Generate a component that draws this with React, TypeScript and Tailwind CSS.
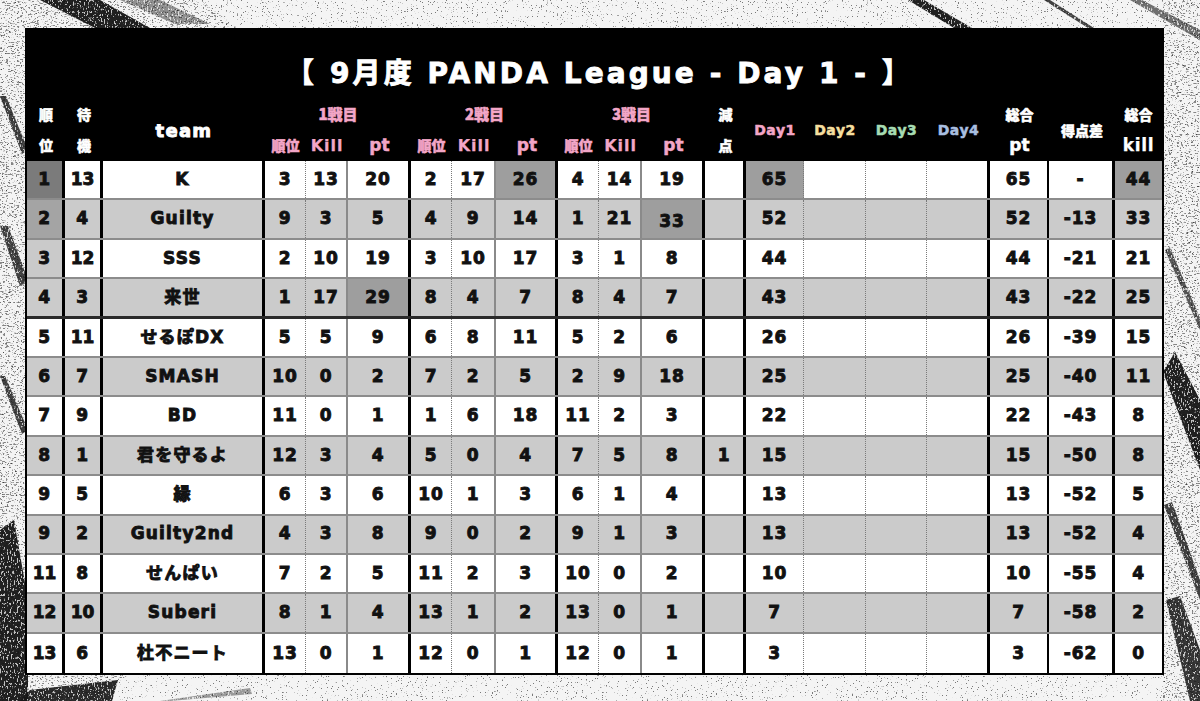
const FONT = "font-['DejaVu_Sans','Noto_Sans_CJK_JP',sans-serif]";
const JP = "font-['Noto_Sans_CJK_JP','DejaVu_Sans',sans-serif]";
const HEAVY = '[-webkit-text-stroke:0.9px_currentColor]';
const MID = '[-webkit-text-stroke:0.5px_currentColor]';
const THIN = '[-webkit-text-stroke:0.25px_currentColor]';

// widths include the right border of each cell
const cols = [
  { w: 'w-[38px]', b: 'border-r-[3px] border-r-black' }, // 順位
  { w: 'w-[38px]', b: 'border-r-[3px] border-r-black' }, // 待機
  { w: 'w-[162px]', b: 'border-r-[3px] border-r-black' }, // team
  { w: 'w-[41px]', b: 'border-r border-dotted border-r-[#7a7a7a]' },
  { w: 'w-[42px]', b: 'border-r-2 border-r-[#8a8a8a]' },
  { w: 'w-[63px]', b: 'border-r-[3px] border-r-black' },
  { w: 'w-[41px]', b: 'border-r border-dotted border-r-[#7a7a7a]' },
  { w: 'w-[44px]', b: 'border-r-2 border-r-[#8a8a8a]' },
  { w: 'w-[62px]', b: 'border-r-[3px] border-r-black' },
  { w: 'w-[41px]', b: 'border-r border-dotted border-r-[#7a7a7a]' },
  { w: 'w-[43px]', b: 'border-r-2 border-r-[#8a8a8a]' },
  { w: 'w-[63px]', b: 'border-r-[3px] border-r-black' },
  { w: 'w-[41px]', b: 'border-r-[3px] border-r-black' }, // 減点
  { w: 'w-[58px]', b: 'border-r border-dotted border-r-[#7a7a7a]' }, // Day1
  { w: 'w-[62px]', b: 'border-r border-dotted border-r-[#7a7a7a]' },
  { w: 'w-[61px]', b: 'border-r border-dotted border-r-[#7a7a7a]' },
  { w: 'w-[63px]', b: 'border-r-[3px] border-r-black' }, // Day4
  { w: 'w-[59px]', b: 'border-r-2 border-r-black' }, // 総合pt
  { w: 'w-[66px]', b: 'border-r-[3px] border-r-black' }, // 得点差
  { w: 'w-[47px]', b: '' }, // 総合kill
];

type Row = (string | number)[];

// rank, wait, team, r1,k1,p1, r2,k2,p2, r3,k3,p3, 減点, day1, day2, day3, day4, pt, 差, kill
const rows: Row[] = [
  [1, 13, 'K', 3, 13, 20, 2, 17, 26, 4, 14, 19, '', 65, '', '', '', 65, '-', 44],
  [2, 4, 'Guilty', 9, 3, 5, 4, 9, 14, 1, 21, 33, '', 52, '', '', '', 52, -13, 33],
  [3, 12, 'SSS', 2, 10, 19, 3, 10, 17, 3, 1, 8, '', 44, '', '', '', 44, -21, 21],
  [4, 3, '来世', 1, 17, 29, 8, 4, 7, 8, 4, 7, '', 43, '', '', '', 43, -22, 25],
  [5, 11, 'せるぽDX', 5, 5, 9, 6, 8, 11, 5, 2, 6, '', 26, '', '', '', 26, -39, 15],
  [6, 7, 'SMASH', 10, 0, 2, 7, 2, 5, 2, 9, 18, '', 25, '', '', '', 25, -40, 11],
  [7, 9, 'BD', 11, 0, 1, 1, 6, 18, 11, 2, 3, '', 22, '', '', '', 22, -43, 8],
  [8, 1, '君を守るよ', 12, 3, 4, 5, 0, 4, 7, 5, 8, 1, 15, '', '', '', 15, -50, 8],
  [9, 5, '縁', 6, 3, 6, 10, 1, 3, 6, 1, 4, '', 13, '', '', '', 13, -52, 5],
  [9, 2, 'Guilty2nd', 4, 3, 8, 9, 0, 2, 9, 1, 3, '', 13, '', '', '', 13, -52, 4],
  [11, 8, 'せんぱい', 7, 2, 5, 11, 2, 3, 10, 0, 2, '', 10, '', '', '', 10, -55, 4],
  [12, 10, 'Suberi', 8, 1, 4, 13, 1, 2, 13, 0, 1, '', 7, '', '', '', 7, -58, 2],
  [13, 6, '杜不ニート', 13, 0, 1, 12, 0, 1, 12, 0, 1, '', 3, '', '', '', 3, -62, 0],
];

// dark cells: "row-col"
const dark = new Set(['0-8', '0-13', '0-19', '1-11', '3-5']);
const rankBg = ['bg-[#7b7b7b]', 'bg-[#a4a4a4]', 'bg-[#cacaca]'];

// brush strokes drawn as filled quads
const strokes: { pts: string; o: number }[] = [
  { pts: '40,0 100,0 150,28 95,28', o: 0.95 },
  { pts: '120,0 160,0 210,24 175,24', o: 0.45 },
  { pts: '0,96 6,96 28,150 22,154', o: 0.8 },
  { pts: '0,226 8,226 28,280 20,286', o: 0.8 },
  { pts: '0,376 5,376 28,430 22,434', o: 0.8 },
  { pts: '0,530 14,520 28,600 28,701 0,701', o: 0.95 },
  { pts: '20,701 30,690 118,680 112,701', o: 0.9 },
  { pts: '160,701 250,688 252,694 170,701', o: 0.4 },
  { pts: '908,0 924,0 972,28 954,28', o: 0.95 },
  { pts: '1044,0 1050,0 1094,28 1088,28', o: 0.8 },
  { pts: '1130,0 1142,0 1200,30 1200,40', o: 0.6 },
  { pts: '1165,250 1170,248 1200,318 1200,330', o: 0.7 },
  { pts: '1163,372 1175,352 1200,400 1200,470', o: 0.95 },
  { pts: '1164,505 1172,502 1200,580 1200,600', o: 0.8 },
  { pts: '1166,600 1180,596 1200,650 1200,701 1190,701', o: 0.85 },
];

function Grunge() {
  return (
    <svg className="absolute inset-0" width="1200" height="701" viewBox="0 0 1200 701">
      <defs>
        <filter id="speck" x="0" y="0" width="100%" height="100%">
          <feTurbulence type="fractalNoise" baseFrequency="0.8" numOctaves="2" seed="4" />
          <feColorMatrix type="matrix" values="0 0 0 0 0  0 0 0 0 0  0 0 0 0 0  14 0 0 0 -9.4" />
        </filter>
        <filter id="dense" x="0" y="0" width="100%" height="100%">
          <feTurbulence type="fractalNoise" baseFrequency="0.35 0.9" numOctaves="3" seed="9" />
          <feColorMatrix type="matrix" values="0 0 0 0 0  0 0 0 0 0  0 0 0 0 0  10 0 0 0 -5.9" />
        </filter>
        <filter id="chips" x="0" y="0" width="100%" height="100%">
          <feTurbulence type="fractalNoise" baseFrequency="0.7 0.35" numOctaves="2" seed="12" />
          <feColorMatrix type="matrix" values="0 0 0 0 0.95  0 0 0 0 0.95  0 0 0 0 0.95  12 0 0 0 -7" />
        </filter>
        <clipPath id="edges">
          <polygon points="0,0 30,0 30,701 0,701" />
          <polygon points="1163,0 1200,0 1200,701 1163,701" />
          <polygon points="0,0 200,0 240,30 0,30" />
          <polygon points="0,674 130,674 90,701 0,701" />
        </clipPath>
        <clipPath id="strokeClip">
          {strokes.map((s, i) => (
            <polygon key={i} points={s.pts} />
          ))}
        </clipPath>
      </defs>
      <rect width="1200" height="701" filter="url(#speck)" opacity="0.5" />
      <rect width="1200" height="701" filter="url(#dense)" clipPath="url(#edges)" opacity="0.45" />
      {strokes.map((s, i) => (
        <polygon key={i} points={s.pts} fill="#151515" fillOpacity={s.o} />
      ))}
      <rect width="1200" height="701" filter="url(#chips)" clipPath="url(#strokeClip)" opacity="0.75" />
    </svg>
  );
}

function TwoLine({ w, a, b, cls }: { w: string; a: string; b: string; cls: string }) {
  return (
    <div className={`${w} flex flex-col`}>
      <div className={`h-[31px] flex items-center justify-center ${cls}`}>{a}</div>
      <div className={`h-[31px] flex items-center justify-center ${cls}`}>{b}</div>
    </div>
  );
}

function Group({ n, i }: { n: number; i: number }) {
  return (
    <div className="flex flex-col">
      <div className={`h-[31px] flex items-center justify-center text-[#f3a6c7] text-[15px] font-black ${MID} ${JP}`}>{n}戦目</div>
      <div className="h-[31px] flex text-[#f3a6c7]">
        <div className={`${cols[i].w} flex items-center justify-center text-[14px] font-black ${MID} ${JP}`}>順位</div>
        <div className={`${cols[i + 1].w} flex items-center justify-center text-[16px] font-bold tracking-[0.06em] ${THIN} ${FONT}`}>Kill</div>
        <div className={`${cols[i + 2].w} flex items-center justify-center text-[17px] font-bold ${MID} ${FONT}`}>pt</div>
      </div>
    </div>
  );
}

function Header() {
  const jpW = `text-white text-[14px] font-black ${MID} ${JP}`;
  const day = `text-[14px] font-bold tracking-[0.04em] ${MID} ${FONT}`;
  return (
    <div className="bg-black">
      <div className="h-[69px] pt-[30px]">
        <div className={`h-[28px] leading-[28px] text-center text-white text-[28px] font-bold tracking-[0.11em] ${HEAVY} ${FONT} pl-[10px]`}>
          【 9月度 PANDA League - Day 1 - 】
        </div>
      </div>
      <div className="flex h-[62px]">
        <TwoLine w={cols[0].w} a="順" b="位" cls={jpW} />
        <TwoLine w={cols[1].w} a="待" b="機" cls={jpW} />
        <div className={`${cols[2].w} flex items-center justify-center text-white text-[18px] font-bold tracking-[0.07em] ${HEAVY} ${FONT}`}>team</div>
        <Group n={1} i={3} />
        <Group n={2} i={6} />
        <Group n={3} i={9} />
        <TwoLine w={cols[12].w} a="減" b="点" cls={jpW} />
        <div className={`${cols[13].w} flex items-center justify-center text-[#f3a6c7] ${day}`}>Day1</div>
        <div className={`${cols[14].w} flex items-center justify-center text-[#f5df9f] ${day}`}>Day2</div>
        <div className={`${cols[15].w} flex items-center justify-center text-[#a6dcb3] ${day}`}>Day3</div>
        <div className={`${cols[16].w} flex items-center justify-center text-[#a9bfe0] ${day}`}>Day4</div>
        <div className={`${cols[17].w} flex flex-col`}>
          <div className={`h-[31px] flex items-center justify-center ${jpW}`}>総合</div>
          <div className={`h-[31px] flex items-center justify-center text-white text-[17px] font-bold ${MID} ${FONT}`}>pt</div>
        </div>
        <div className={`${cols[18].w} flex items-center justify-center ${jpW}`}>得点差</div>
        <div className={`${cols[19].w} flex flex-col`}>
          <div className={`h-[31px] flex items-center justify-center ${jpW}`}>総合</div>
          <div className={`h-[31px] flex items-center justify-center text-white text-[17px] font-bold tracking-[0.04em] ${THIN} ${FONT}`}>kill</div>
        </div>
      </div>
    </div>
  );
}

function Body() {
  return (
    <div>
      {rows.map((r, ri) => {
        const rowBg = ri % 2 === 0 ? 'bg-white' : 'bg-[#cbcbcb]';
        const sep =
          ri === rows.length - 1 ? '' : ri === 3 ? 'border-b-[3px] border-b-[#2a2a2a]' : 'border-b-2 border-b-[#8c8c8c]';
        return (
          <div key={ri} className={`flex h-[39.4px] ${sep}`}>
            {r.map((v, ci) => {
              let bg = rowBg;
              if (ci === 0 && ri < 3) bg = rankBg[ri];
              if (dark.has(`${ri}-${ci}`)) bg = 'bg-[#9e9e9e]';
              const isTeam = ci === 2;
              const shift = ri === 1 && ci === 11 ? 'pt-[6px]' : '';
              const narrow = (ci === 0 || ci === 1) && String(v).length > 1 ? 'tracking-[0]' : 'tracking-[0.05em]';
              return (
                <div
                  key={ci}
                  className={`${cols[ci].w} ${cols[ci].b} ${bg} ${shift} flex items-center justify-center text-[#111] font-bold ${HEAVY} ${
                    isTeam ? 'text-[17px] tracking-[0.07em]' : `text-[17px] ${narrow}`
                  } ${FONT}`}
                >
                  {v}
                </div>
              );
            })}
          </div>
        );
      })}
    </div>
  );
}

export default function App() {
  return (
    <div className="relative w-[1200px] h-[701px] overflow-hidden bg-[#f4f4f4]">
      <Grunge />
      <div className="relative pt-[28px] pl-[25px]">
        <div className="w-[1139px] border-2 border-black bg-black">
          <Header />
          <Body />
        </div>
      </div>
    </div>
  );
}
